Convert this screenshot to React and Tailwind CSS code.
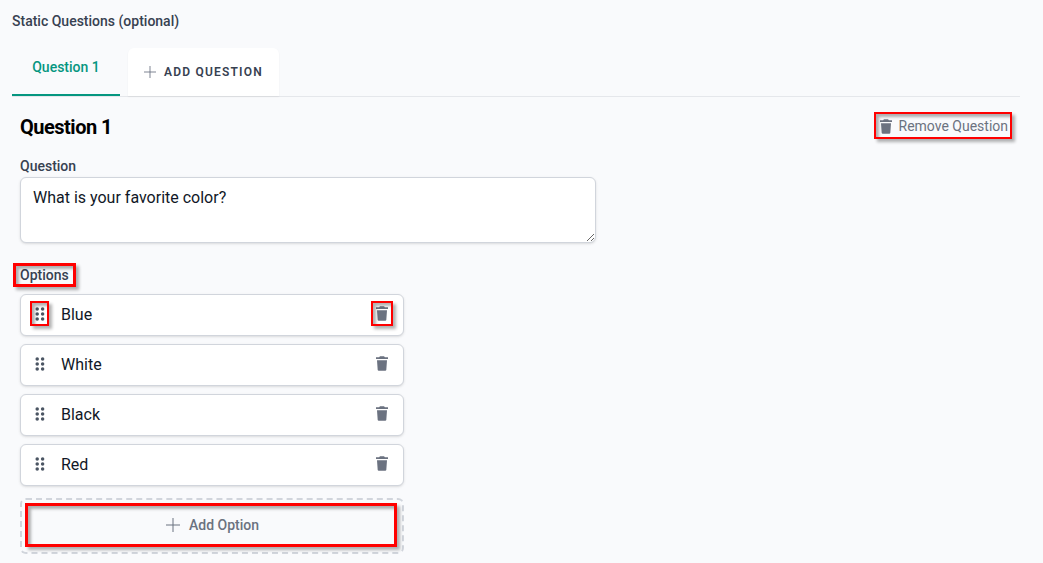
/**
 * Static questions editor: question tabs, the question text and its
 * list of answer options, with callout frames around the controls.
 */
import { useState } from 'react'
import { clsx } from 'clsx'

const INITIAL_OPTIONS = ['Blue', 'White', 'Black', 'Red']

function PlusIcon({ className }) {
  return (
    <svg viewBox="0 0 14 14" fill="none" stroke="currentColor" className={className} aria-hidden="true">
      <path d="M7 0v14M0 7h14" />
    </svg>
  )
}

function TrashIcon() {
  return (
    <svg viewBox="0 0 12 15" fill="currentColor" className="h-[15px] w-3 shrink-0" aria-hidden="true">
      <path d="M4 .3h4l.9.9H12v1.700H0V1.200h3.100zM1 4.200h10l-.7 9.800a1 1 0 0 1-1 .8H2.700a1 1 0 0 1-1-.8z" />
    </svg>
  )
}

function DragIcon() {
  return (
    <svg viewBox="0 0 10 14" fill="currentColor" className="h-3.5 w-2.5" aria-hidden="true">
      {[2, 7, 12].map((y) => (
        <g key={y}>
          <circle cx="2.2" cy={y} r="1.75" />
          <circle cx="7.6" cy={y} r="1.75" />
        </g>
      ))}
    </svg>
  )
}

// Red frame laid over a control
function Callout({ className }) {
  return (
    <span
      className={clsx(
        'pointer-events-none absolute border-[#ff0000] shadow-[3px_3px_3px_rgba(0,0,0,0.3),inset_3px_3px_3px_rgba(0,0,0,0.3)]',
        className,
      )}
    />
  )
}

function OptionRow({ label, highlighted, onRemove }) {
  return (
    <li className="flex h-[42px] items-center rounded-md border border-gray-300 bg-white pr-[15px] pl-3.5 shadow-sm">
      <span className="relative mt-[-2px] cursor-move text-[#4b5563]">
        <DragIcon />
        {highlighted && <Callout className="-top-[6px] -left-[5px] h-[25px] w-[19px] border-2" />}
      </span>
      <span className="ml-4 flex-1 text-base text-[#111827]">{label}</span>
      <button type="button" onClick={onRemove} className="relative mt-[-3px] text-[#6b7280]" aria-label={`Remove ${label}`}>
        <TrashIcon />
        {highlighted && <Callout className="-top-[5px] -left-[5px] h-[25px] w-[22px] border-2" />}
      </button>
    </li>
  )
}

export default function App() {
  const [question, setQuestion] = useState('What is your favorite color?')
  const [options, setOptions] = useState(INITIAL_OPTIONS)

  function removeOption(index) {
    setOptions(options.filter((_, i) => i !== index))
  }

  return (
    <div className="h-[563px] overflow-hidden bg-[#f9fafc] pt-[11px] pr-[23px] pl-3 font-['Roboto',sans-serif]">
      <h2 className="text-sm font-medium text-[#374151]">Static Questions (optional)</h2>

      <div className="mt-[17px] flex h-[49px] gap-2 border-b border-gray-200">
        <button type="button" className="h-12 w-[108px] border-b-2 border-[#059680] pb-2 text-sm font-medium text-[#059680]">
          Question 1
        </button>
        <button
          type="button"
          className="flex h-12 w-[151px] items-center rounded-t-md bg-white pl-4 text-xs font-semibold tracking-[1.2px] text-[#374151] shadow-[0_1px_2px_rgba(0,0,0,0.06)]"
        >
          <PlusIcon className="mr-2 h-3 w-3 text-gray-500" />
          ADD QUESTION
        </button>
      </div>

      <div className="px-2 pt-4">
        <div className="flex items-center justify-between">
          <h3 className="text-xl font-bold tracking-tight text-black">Question 1</h3>
          <button type="button" className="relative mr-1 mb-0.5 flex items-center gap-[7px] text-sm text-[#6b7280]">
            <TrashIcon />
            Remove Question
            <Callout className="-top-[4px] -right-[4px] h-[27px] w-[138px] border-2" />
          </button>
        </div>

        <label htmlFor="question" className="mt-[15px] block text-sm font-medium text-[#374151]">
          Question
        </label>
        <textarea
          id="question"
          rows={2}
          value={question}
          onChange={(e) => setQuestion(e.target.value)}
          className="mt-px block h-[66px] w-[576px] rounded-md border border-gray-300 bg-white px-3 py-2 text-base text-[#111827] shadow-sm"
        />

        <div className="mt-[22px] flex">
          <h4 className="relative text-sm font-medium text-[#374151]">
            Options
            <Callout className="-top-[2px] -left-[7px] h-6 w-[63px] border-[3px]" />
          </h4>
        </div>
        <ul className="mt-[9px] w-96 space-y-2">
          {options.map((label, index) => (
            <OptionRow key={index} label={label} highlighted={index === 0} onRemove={() => removeOption(index)} />
          ))}
        </ul>
        <button
          type="button"
          onClick={() => setOptions([...options, ''])}
          className="relative mt-3 flex h-14 w-96 items-center justify-center rounded-md border-2 border-dashed border-gray-300 pb-0.5 pl-px text-sm font-medium text-[#6b7280]"
        >
          <PlusIcon className="mr-[9px] h-3.5 w-3.5" />
          Add Option
          <Callout className="top-[3px] left-[3px] h-11 w-[372px] border-[3px]" />
        </button>
      </div>
    </div>
  )
}
